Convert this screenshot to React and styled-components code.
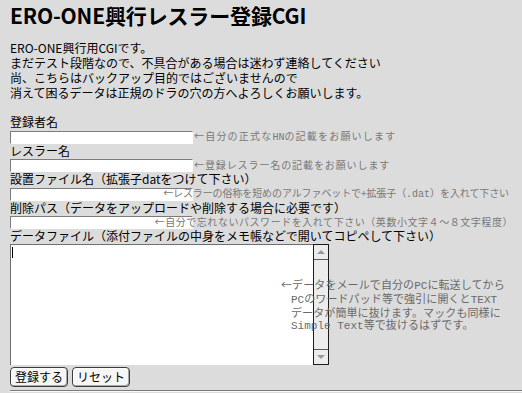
import React from "react";
import styled, { createGlobalStyle } from "styled-components";

const Global = createGlobalStyle`
  html, body { margin: 0; padding: 0; background: #dcdcdc; }
  body { font-family: "Noto Sans CJK JP", sans-serif; color: #000; }
`;

const Page = styled.div`
  width: 522px;
  height: 393px;
  overflow: hidden;
  box-sizing: border-box;
  padding: 0 8px 0 10px;
  display: flex;
  flex-direction: column;
`;

const Title = styled.h1`
  margin: 3px 0 0;
  font-size: 21px;
  line-height: 24px;
  font-weight: 700;
  letter-spacing: -0.15px;
  white-space: nowrap;
`;

const Intro = styled.p`
  margin: 12.5px 0 0;
  font-size: 12px;
  line-height: 15px;
  white-space: nowrap;
`;

const Form = styled.form`
  margin: 14.5px 0 0;
  display: flex;
  flex-direction: column;
`;

const Label = styled.div`
  font-size: 12px;
  line-height: 16px;
  white-space: nowrap;
`;

const Row = styled.div`
  display: grid;
  grid-template-columns: ${(p) => (p.$overlay ? "1fr" : "183px auto")};
  align-items: center;
  height: 12.5px;
  & > * { grid-row: 1; }
`;

const TextInput = styled.input`
  box-sizing: border-box;
  width: 183px;
  height: 13px;
  margin: 0;
  padding: 0 2px;
  border: 1px solid;
  border-color: #7c7c7c #ffffff #ffffff #7c7c7c;
  background: #fff;
  font-size: 10px;
  outline: none;
  grid-column: 1;
  justify-self: start;
`;

const Hint = styled.span`
  position: relative;
  font-size: 10px;
  line-height: 12px;
  color: #787878;
  letter-spacing: ${(p) => p.$spacing}px;
  white-space: nowrap;
  padding-left: ${(p) => (p.$overlay ? "0" : "1px")};
  grid-column: ${(p) => (p.$overlay ? "1" : "2")};
  justify-self: ${(p) => (p.$overlay ? "end" : "start")};
  padding-right: ${(p) => p.$right || 0}px;
`;

const Latin = styled.span`
  font-family: "Liberation Mono", monospace;
  letter-spacing: 0;
`;

const DataRow = styled.div`
  display: flex;
  align-items: center;
`;

const Editor = styled.div`
  position: relative;
  display: flex;
  flex-shrink: 0;
  width: 319px;
  height: 121px;
`;

const Area = styled.textarea`
  box-sizing: border-box;
  width: 303px;
  height: 100%;
  margin: 0;
  padding: 2px;
  border: none;
  border-top: 1px solid #6f6f6f;
  border-left: 1px solid #6f6f6f;
  background: #fff;
  resize: none;
  outline: none;
  overflow: hidden;
  font-size: 12px;
`;

const Caret = styled.span`
  position: absolute;
  left: 2px;
  top: 3px;
  width: 1px;
  height: 11px;
  background: #000;
`;

const Scrollbar = styled.div`
  box-sizing: border-box;
  width: 16px;
  height: 100%;
  border: 1px solid #1c1c1c;
  background: #ececec;
  display: flex;
  flex-direction: column;
  justify-content: space-between;
`;

const ScrollBtn = styled.div`
  height: 14px;
  display: flex;
  align-items: center;
  justify-content: center;
  ${(p) => (p.$down ? "border-top: 1px solid #5a5a5a;" : "border-bottom: 1px solid #5a5a5a;")}
`;

const Note = styled.div`
  position: relative;
  z-index: 1;
  margin-left: -48px;
  font-size: 11px;
  line-height: 12px;
  color: #6a6a6a;
  letter-spacing: 0.1px;
  white-space: nowrap;
`;

const NoteLine = styled.div`
  padding-left: ${(p) => (p.$indent ? "10px" : "0")};
`;

const Buttons = styled.div`
  display: flex;
  gap: 4px;
  margin-top: 2px;
`;

const Button = styled.button`
  box-sizing: border-box;
  height: 20px;
  margin: 0;
  padding: 0 4px;
  font-family: "Noto Sans CJK JP", sans-serif;
  font-size: 12px;
  line-height: 16px;
  color: #000;
  border: 1px solid #3c3c3c;
  border-radius: 4px;
  background: #f6f6f6;
  box-shadow: inset -1px -1px 0 #a8a8a8, inset 1px 1px 0 #ffffff;
`;

const Rule = styled.hr`
  margin: 3px -8px 0 0;
  border: 0;
  border-top: 1px solid #7a7a7a;
  border-bottom: 1px solid #fafafa;
`;

const Arrow = ({ down }) => (
  <svg width="8" height="4" viewBox="0 0 8 4">
    <path d={down ? "M0 0 H8 L4 4 Z" : "M0 4 H8 L4 0 Z"} fill="#999" />
  </svg>
);

export default function App() {
  return (
    <>
      <Global />
      <Page>
        <Title>ERO-ONE興行レスラー登録CGI</Title>
        <Intro>
          ERO-ONE興行用CGIです。
          <br />
          まだテスト段階なので、不具合がある場合は迷わず連絡してください
          <br />
          尚、こちらはバックアップ目的ではございませんので
          <br />
          消えて困るデータは正規のドラの穴の方へよろしくお願いします。
        </Intro>
        <Form onSubmit={(e) => e.preventDefault()}>
          <Label>登録者名</Label>
          <Row>
            <TextInput type="text" />
            <Hint $spacing={1.2}>
              ←自分の正式な<Latin>HN</Latin>の記載をお願いします
            </Hint>
          </Row>
          <Label>レスラー名</Label>
          <Row>
            <TextInput type="text" />
            <Hint $spacing={0.9}>←登録レスラー名の記載をお願いします</Hint>
          </Row>
          <Label>設置ファイル名（拡張子datをつけて下さい）</Label>
          <Row $overlay>
            <TextInput type="text" />
            <Hint $overlay $spacing={-0.1} $right={5}>
              ←レスラーの俗称を短めのアルファベットで+拡張子（<Latin>.dat</Latin>）を入れて下さい
            </Hint>
          </Row>
          <Label>削除パス（データをアップロードや削除する場合に必要です）</Label>
          <Row $overlay>
            <TextInput type="text" />
            <Hint $overlay $spacing={0.55} $right={1}>
              ←自分で忘れないパスワードを入れて下さい（英数小文字４～８文字程度）
            </Hint>
          </Row>
          <Label>データファイル（添付ファイルの中身をメモ帳などで開いてコピペして下さい）</Label>
          <DataRow>
            <Editor>
              <Area />
              <Caret />
              <Scrollbar>
                <ScrollBtn>
                  <Arrow />
                </ScrollBtn>
                <ScrollBtn $down>
                  <Arrow down />
                </ScrollBtn>
              </Scrollbar>
            </Editor>
            <Note>
              <NoteLine>
                ←データをメールで自分の<Latin>PC</Latin>に転送してから
              </NoteLine>
              <NoteLine $indent>
                <Latin>PC</Latin>のワードパッド等で強引に開くと<Latin>TEXT</Latin>
              </NoteLine>
              <NoteLine $indent>データが簡単に抜けます。マックも同様に</NoteLine>
              <NoteLine $indent>
                <Latin>Simple Text</Latin>等で抜けるはずです。
              </NoteLine>
            </Note>
          </DataRow>
          <Buttons>
            <Button type="submit">登録する</Button>
            <Button type="reset">リセット</Button>
          </Buttons>
        </Form>
        <Rule />
      </Page>
    </>
  );
}
